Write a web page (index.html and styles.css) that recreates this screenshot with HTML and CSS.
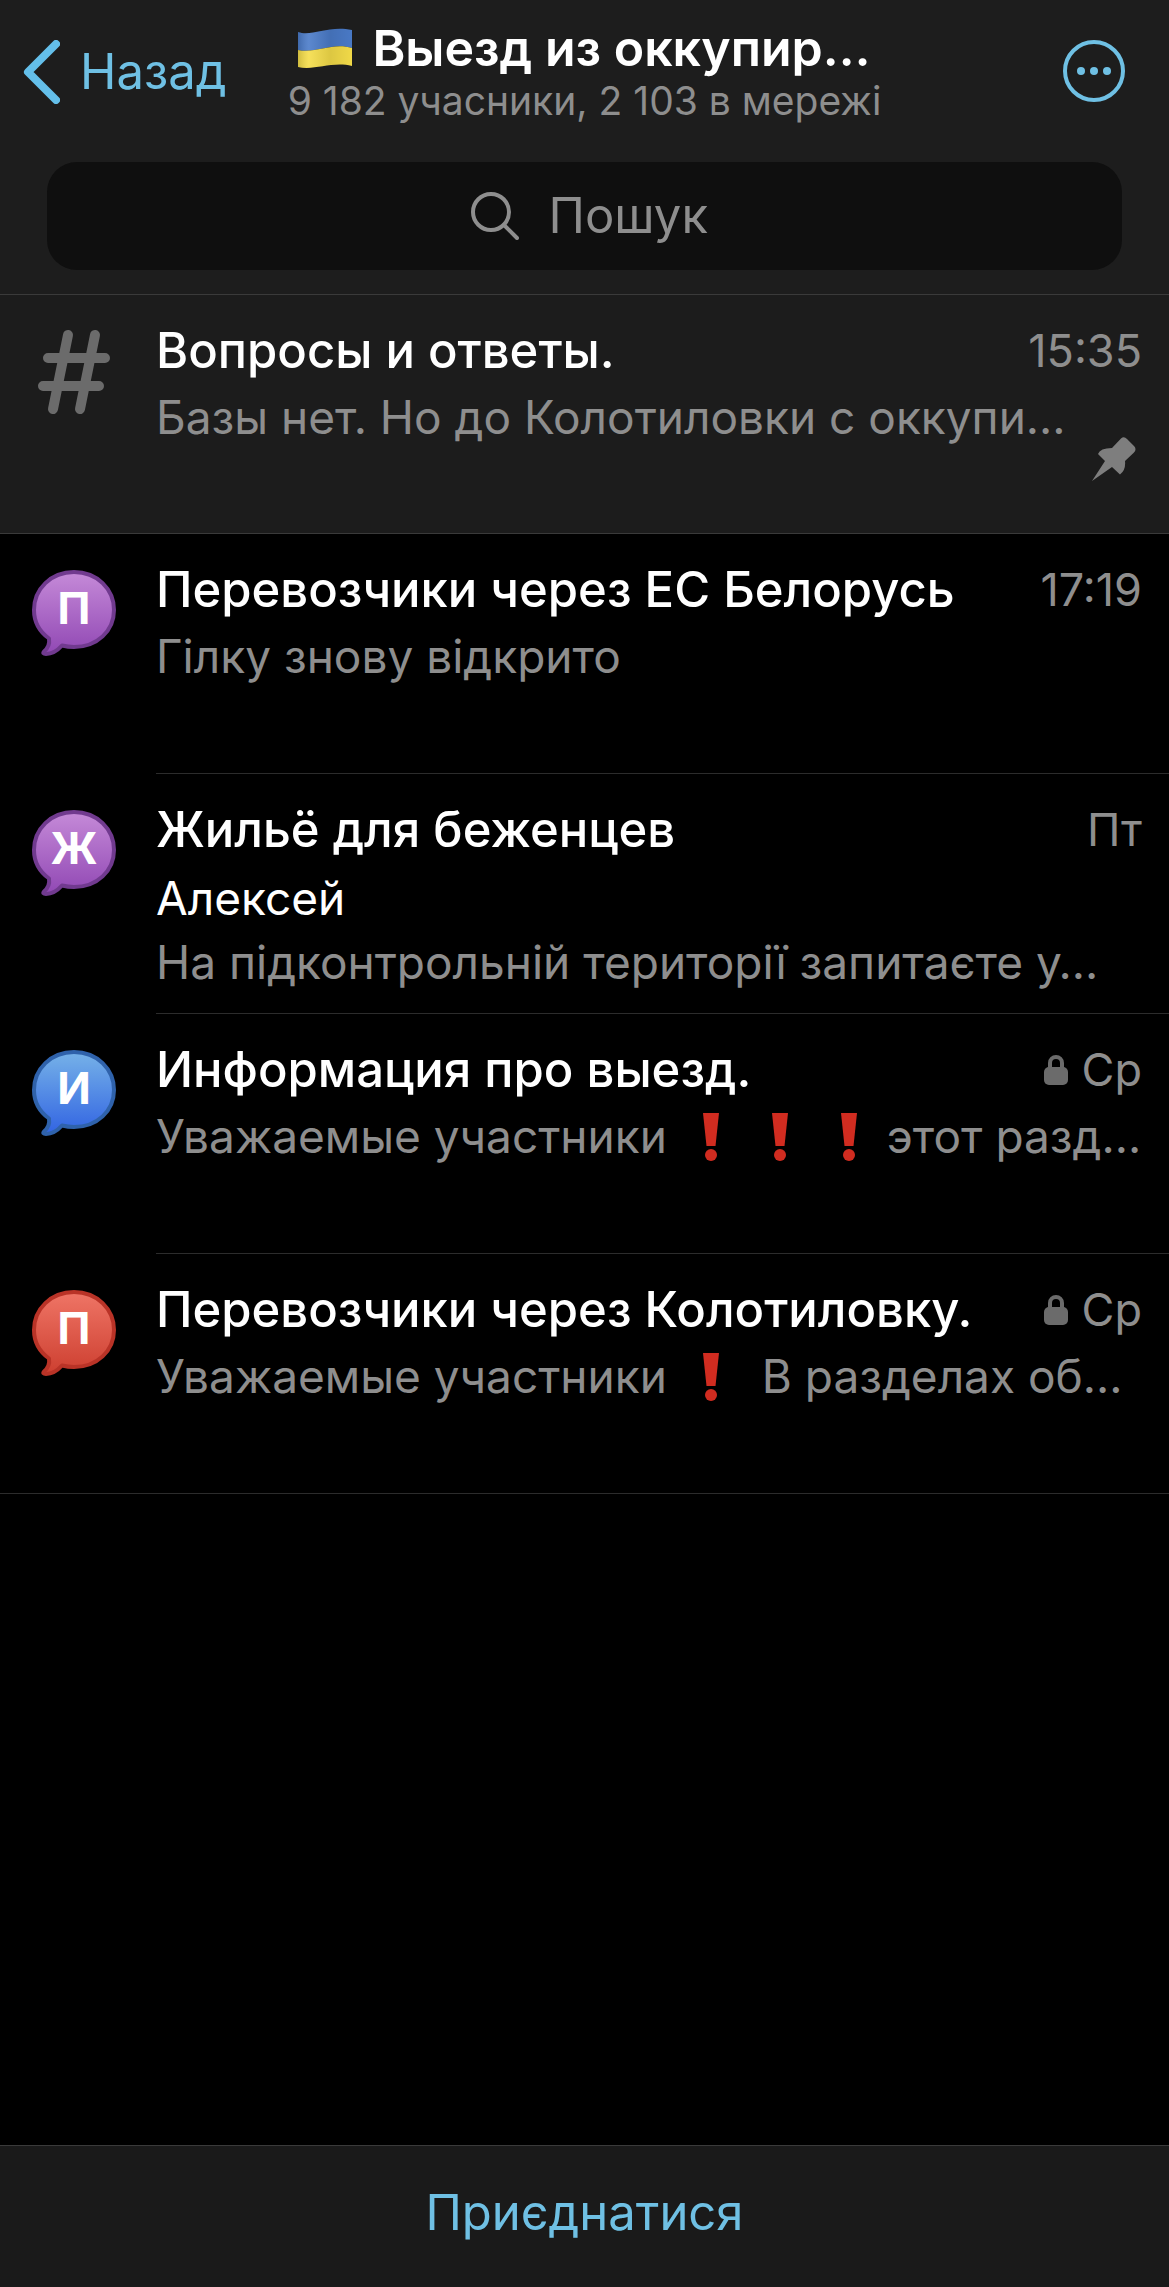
FILE: index.html
```html
<!DOCTYPE html>
<html lang="uk">
<head>
    <meta charset="UTF-8">
    <meta name="viewport" content="width=device-width, initial-scale=1.0">
    <title>Выезд из оккупир…</title>
    <link rel="stylesheet" href="styles.css">
</head>
<body>
    <!-- Shared shapes -->
    <svg class="defs" aria-hidden="true">
        <defs>
            <linearGradient id="violet" x1="0" y1="0" x2="0" y2="1">
                <stop offset="0" stop-color="#c58ad8"/>
                <stop offset="1" stop-color="#9148b4"/>
            </linearGradient>
            <linearGradient id="blue" x1="0" y1="0" x2="0" y2="1">
                <stop offset="0" stop-color="#76b2e8"/>
                <stop offset="1" stop-color="#3264e2"/>
            </linearGradient>
            <linearGradient id="red" x1="0" y1="0" x2="0" y2="1">
                <stop offset="0" stop-color="#ef7566"/>
                <stop offset="1" stop-color="#cd3f30"/>
            </linearGradient>
            <symbol id="bubble" viewBox="0 0 86 86">
                <path d="M43 2C20 2 3 19 3 40C3 52 9 62 18 68.500C19 75 16 79 13 81.500Q11 84 15 84C21 84 27 80 31 75.500Q37 77 43 77C66 77 83 61 83 40C83 19 66 2 43 2Z" stroke-width="4" stroke-linejoin="round"/>
            </symbol>
            <symbol id="lock" viewBox="0 0 24 30">
                <path d="M6 13V8a6 6 0 0 1 12 0v5" fill="none" stroke="#6b6b6b" stroke-width="4"/>
                <rect y="12" width="24" height="18" rx="5" fill="#6b6b6b"/>
            </symbol>
            <symbol id="mark" viewBox="0 0 16 48">
                <path d="M0 0H16L12.500 33H3.500Z" fill="#d12c20"/>
                <circle cx="8" cy="42" r="6" fill="#d12c20"/>
            </symbol>
        </defs>
    </svg>

    <header class="header">
        <nav class="nav">
            <a class="back" href="#">
                <svg width="37" height="64" viewBox="0 0 37 64" aria-hidden="true"><path d="M33 4 5 32l28 28" fill="none" stroke="#64bfea" stroke-width="8" stroke-linecap="round" stroke-linejoin="round"/></svg>
                Назад
            </a>
            <div class="heading">
                <h1 class="heading-title">
                    <svg class="flag" width="54" height="40" viewBox="0 0 54 40" role="img" aria-label="Україна">
                        <defs>
                            <linearGradient id="shade">
                                <stop offset="0" stop-color="#000" stop-opacity=".15"/>
                                <stop offset=".2" stop-color="#fff" stop-opacity=".1"/>
                                <stop offset=".6" stop-color="#000" stop-opacity=".1"/>
                                <stop offset="1" stop-color="#000" stop-opacity=".02"/>
                            </linearGradient>
                        </defs>
                        <path d="M0 4C14 9 30-3 54 2V20C34 14 18 26 0 22Z" fill="#4a7bc9"/>
                        <path d="M0 22C18 26 34 14 54 20V38C34 33 16 43 0 39Z" fill="#f5dd49"/>
                        <path d="M0 4C14 9 30-3 54 2V38C34 33 16 43 0 39Z" fill="url(#shade)"/>
                    </svg>
                    Выезд из оккупир…
                </h1>
                <div class="heading-status">9 182 учасники, 2 103 в мережі</div>
            </div>
            <button class="more" type="button" aria-label="Меню">
                <svg width="62" height="62" viewBox="0 0 62 62" aria-hidden="true">
                    <circle cx="31" cy="31" r="29" fill="none" stroke="#6fc0e4" stroke-width="4"/>
                    <g fill="#6fc0e4"><circle cx="18" cy="31" r="4"/><circle cx="31" cy="31" r="4"/><circle cx="44" cy="31" r="4"/></g>
                </svg>
            </button>
        </nav>
        <label class="search">
            <svg width="48" height="48" viewBox="0 0 48 48" aria-hidden="true"><g fill="none" stroke="#8e8e8e" stroke-width="4" stroke-linecap="round"><circle cx="20" cy="20" r="18"/><path d="M33 33 46 46"/></g></svg>
            <input class="search-input" type="text" placeholder="Пошук" aria-label="Пошук">
        </label>
    </header>

    <main class="topics">
        <article class="topic pinned">
            <div class="topic-icon">
                <svg width="74" height="86" viewBox="0 0 74 86" aria-hidden="true"><path d="M31 6 16 80M58 6 43 80M11 29H68M6 57H62" fill="none" stroke="#6b6b6b" stroke-width="10" stroke-linecap="round"/></svg>
            </div>
            <div class="topic-body">
                <div class="topic-head">
                    <h2 class="topic-title">Вопросы и ответы.</h2>
                    <div class="topic-time">15:35</div>
                </div>
                <p class="topic-text">Базы нет. Но до Колотиловки с оккупи…</p>
            </div>
            <svg class="pin" width="44" height="44" viewBox="0 0 44 44" aria-hidden="true"><path d="M29 1.500Q32-1 35 2L42 9Q45 12 42 15.500L33 24Q34 33 28 37.500L20 30 0 44 13 24 6 17Q8 11 20 11Z" fill="#7e7e7e"/></svg>
        </article>

        <article class="topic">
            <div class="topic-icon">
                <svg class="bubble violet" aria-hidden="true"><use href="#bubble"/></svg>
                <span class="letter">П</span>
            </div>
            <div class="topic-body">
                <div class="topic-head">
                    <h2 class="topic-title">Перевозчики через ЕС Белорусь</h2>
                    <div class="topic-time">17:19</div>
                </div>
                <p class="topic-text">Гілку знову відкрито</p>
            </div>
        </article>

        <article class="topic">
            <div class="topic-icon">
                <svg class="bubble violet" aria-hidden="true"><use href="#bubble"/></svg>
                <span class="letter">Ж</span>
            </div>
            <div class="topic-body">
                <div class="topic-head">
                    <h2 class="topic-title">Жильё для беженцев</h2>
                    <div class="topic-time">Пт</div>
                </div>
                <p class="topic-text author">Алексей</p>
                <p class="topic-text">На підконтрольній території запитаєте у…</p>
            </div>
        </article>

        <article class="topic">
            <div class="topic-icon">
                <svg class="bubble blue" aria-hidden="true"><use href="#bubble"/></svg>
                <span class="letter">И</span>
            </div>
            <div class="topic-body">
                <div class="topic-head">
                    <h2 class="topic-title">Информация про выезд.</h2>
                    <div class="topic-time"><svg class="lock" aria-hidden="true"><use href="#lock"/></svg>Ср</div>
                </div>
                <p class="topic-text">Уважаемые участники <svg class="mark" aria-hidden="true"><use href="#mark"/></svg><svg class="mark" aria-hidden="true"><use href="#mark"/></svg><svg class="mark" aria-hidden="true"><use href="#mark"/></svg>этот разд…</p>
            </div>
        </article>

        <article class="topic">
            <div class="topic-icon">
                <svg class="bubble red" aria-hidden="true"><use href="#bubble"/></svg>
                <span class="letter">П</span>
            </div>
            <div class="topic-body">
                <div class="topic-head">
                    <h2 class="topic-title">Перевозчики через Колотиловку.</h2>
                    <div class="topic-time"><svg class="lock" aria-hidden="true"><use href="#lock"/></svg>Ср</div>
                </div>
                <p class="topic-text">Уважаемые участники <svg class="mark" aria-hidden="true"><use href="#mark"/></svg> В разделах об…</p>
            </div>
        </article>
    </main>

    <footer class="footer">
        <button class="join" type="button">Приєднатися</button>
    </footer>
</body>
</html>
```
FILE: styles.css
```css
* {
    box-sizing: border-box;
}

body {
    margin: 0;
    min-height: 100vh;
    display: flex;
    flex-direction: column;
    background-color: #000;
    color: #fff;
    font-family: Inter, "Noto Sans", sans-serif;
    font-size: 49px;
    line-height: 60px;
}

h1, h2, p {
    margin: 0;
}

button {
    padding: 0;
    border: 0;
    background: none;
    font: inherit;
    cursor: pointer;
}

svg {
    flex-shrink: 0;
}

.defs {
    position: absolute;
    width: 0;
    height: 0;
}

/* Header */
.header {
    padding: 18px 47px 24px;
    background-color: #1d1d1d;
    border-bottom: 1px solid #3a3a3a;
}

.nav {
    display: grid;
    grid-template-columns: 1fr auto 1fr;
    align-items: center;
    margin: 0 -24px;
}

.back {
    display: flex;
    align-items: center;
    gap: 20px;
    padding-top: 2px;
    color: #6fc0e4;
    text-decoration: none;
}

.heading {
    text-align: center;
}

.heading-title {
    display: flex;
    align-items: center;
    justify-content: center;
    gap: 20px;
    font-size: 50px;
    font-weight: 600;
}

.heading-status {
    color: #8e8e8e;
    font-size: 39px;
    line-height: 46px;
}

.more {
    justify-self: end;
    height: 62px;
    margin-right: 21px;
}

.more svg {
    display: block;
}

.search {
    display: flex;
    align-items: center;
    justify-content: center;
    gap: 30px;
    height: 108px;
    margin-top: 38px;
    padding-left: 10px;
    border-radius: 30px;
    background-color: #0f0f0f;
}

.search-input {
    width: 160px;
    padding: 0;
    border: 0;
    outline: 0;
    background: none;
    color: #fff;
    font: inherit;
}

.search-input::placeholder {
    color: #8e8e8e;
    opacity: 1;
}

/* Topic list */
.topics {
    flex: 1;
}

.topic {
    position: relative;
    display: flex;
    min-height: 240px;
}

.topic.pinned {
    min-height: 239px;
    background-color: #1c1c1c;
    border-bottom: 1px solid #3a3a3a;
}

.topic:last-child {
    border-bottom: 1px solid #2c2c2c;
}

.topic-icon {
    position: relative;
    flex: 0 0 156px;
    padding: 36px 0 0 31px;
}

.pinned .topic-icon {
    padding: 34px 0 0 37px;
}

.bubble {
    display: block;
    width: 86px;
    height: 86px;
}

.violet {
    fill: url(#violet);
    stroke: #713a8f;
}

.blue {
    fill: url(#blue);
    stroke: #2f62ab;
}

.red {
    fill: url(#red);
    stroke: #b93327;
}

.letter {
    position: absolute;
    top: 44px;
    left: 31px;
    width: 86px;
    text-align: center;
    font-size: 44px;
    font-weight: 700;
}

.topic-body {
    flex: 1;
    min-width: 0;
    padding: 24px 27px 0 0;
}

.topic:not(.pinned):not(:last-child) .topic-body {
    border-bottom: 1px solid #2c2c2c;
}

.topic-head {
    display: flex;
    justify-content: space-between;
    margin-bottom: 2px;
}

.topic-title {
    font-size: 49px;
    font-weight: 500;
    line-height: 64px;
}

.topic-time {
    display: flex;
    align-items: center;
    gap: 14px;
    color: #8e8e8e;
    font-size: 45px;
    line-height: 64px;
}

.topic-text {
    overflow: hidden;
    color: #8e8e8e;
    font-size: 46px;
    line-height: 64px;
    white-space: nowrap;
}

.topic-text.author {
    margin-top: 4px;
    color: #fff;
}

.lock {
    width: 24px;
    height: 30px;
}

.mark {
    width: 16px;
    height: 48px;
    margin: 0 30px 0 23px;
    vertical-align: -8px;
}

.pin {
    position: absolute;
    right: 33px;
    bottom: 52px;
}

/* Bottom bar */
.footer {
    display: flex;
    background-color: #1a1a1a;
    border-top: 1px solid #3a3a3a;
}

.join {
    flex: 1;
    height: 141px;
    padding-bottom: 8px;
    color: #6fc0e4;
}
```
